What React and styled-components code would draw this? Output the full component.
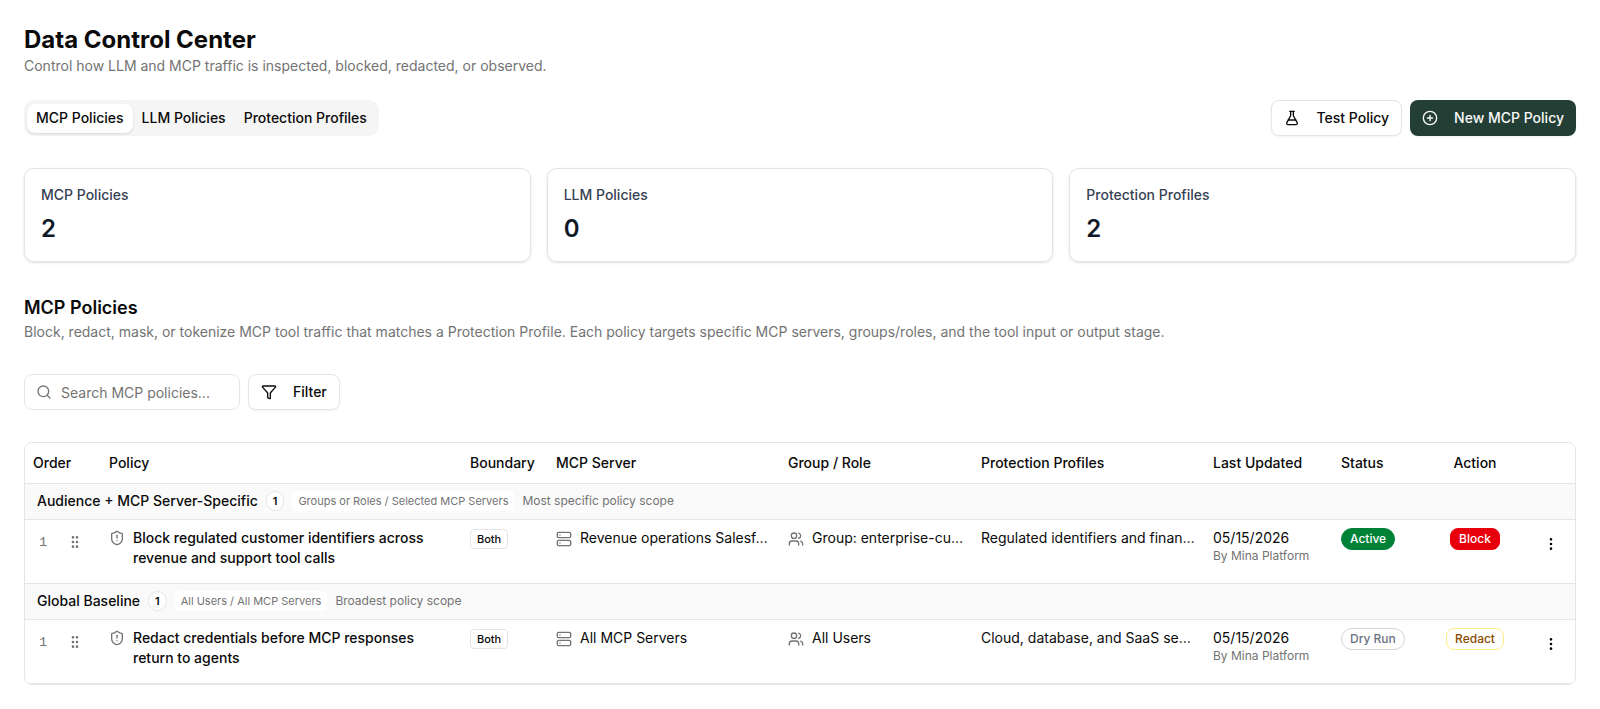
import React from 'react'
import styled, { createGlobalStyle } from 'styled-components'
import {
  CirclePlus,
  EllipsisVertical,
  FlaskConical,
  Funnel,
  GripVertical,
  Search,
  Server,
  ShieldAlert,
  Users,
} from 'lucide-react'

const stats = [
  { label: 'MCP Policies', value: 2 },
  { label: 'LLM Policies', value: 0 },
  { label: 'Protection Profiles', value: 2 },
]

const groups = [
  {
    name: 'Audience + MCP Server-Specific',
    scope: 'Groups or Roles / Selected MCP Servers',
    hint: 'Most specific policy scope',
    policies: [
      {
        order: 1,
        name: 'Block regulated customer identifiers across revenue and support tool calls',
        boundary: 'Both',
        server: 'Revenue operations Salesf…',
        group: 'Group: enterprise-cu…',
        profiles: 'Regulated identifiers and finan…',
        date: '05/15/2026',
        author: 'By Mina Platform',
        status: 'Active',
        action: 'Block',
      },
    ],
  },
  {
    name: 'Global Baseline',
    scope: 'All Users / All MCP Servers',
    hint: 'Broadest policy scope',
    policies: [
      {
        order: 1,
        name: 'Redact credentials before MCP responses return to agents',
        boundary: 'Both',
        server: 'All MCP Servers',
        group: 'All Users',
        profiles: 'Cloud, database, and SaaS se…',
        date: '05/15/2026',
        author: 'By Mina Platform',
        status: 'Dry Run',
        action: 'Redact',
      },
    ],
  },
]

function PolicyRow({ policy }) {
  return (
    <Row>
      <OrderCell>
        <OrderNumber>{policy.order}</OrderNumber>
        <GripVertical size={16} />
      </OrderCell>
      <IconCell $iconTop="2px">
        <ShieldAlert size={16} />
        <PolicyName>{policy.name}</PolicyName>
      </IconCell>
      <Cell>
        <Boundary>{policy.boundary}</Boundary>
      </Cell>
      <IconCell $iconTop="3px">
        <Server size={16} />
        <Truncated>{policy.server}</Truncated>
      </IconCell>
      <IconCell $iconTop="3px">
        <Users size={16} />
        <Truncated>{policy.group}</Truncated>
      </IconCell>
      <Cell>
        <Truncated>{policy.profiles}</Truncated>
      </Cell>
      <Cell>
        <div>{policy.date}</div>
        <Author>{policy.author}</Author>
      </Cell>
      <Cell>
        <Status $variant={policy.status}>{policy.status}</Status>
      </Cell>
      <Cell $center>
        <Action $variant={policy.action}>{policy.action}</Action>
      </Cell>
      <MenuCell>
        <EllipsisVertical size={16} />
      </MenuCell>
    </Row>
  )
}

function App() {
  return (
    <Page>
      <GlobalStyle />
      <Title>Data Control Center</Title>
      <Description>Control how LLM and MCP traffic is inspected, blocked, redacted, or observed.</Description>

      <Toolbar>
        <Tabs>
          <Tab $active>MCP Policies</Tab>
          <Tab>LLM Policies</Tab>
          <Tab>Protection Profiles</Tab>
        </Tabs>
        <Actions>
          <Button>
            <FlaskConical size={16} />
            Test Policy
          </Button>
          <PrimaryButton>
            <CirclePlus size={16} />
            New MCP Policy
          </PrimaryButton>
        </Actions>
      </Toolbar>

      <Stats>
        {stats.map((stat) => (
          <Card key={stat.label}>
            <CardLabel>{stat.label}</CardLabel>
            <CardValue>{stat.value}</CardValue>
          </Card>
        ))}
      </Stats>

      <SectionTitle>MCP Policies</SectionTitle>
      <Description>
        Block, redact, mask, or tokenize MCP tool traffic that matches a Protection Profile. Each policy targets
        specific MCP servers, groups/roles, and the tool input or output stage.
      </Description>

      <Filters>
        <SearchBox>
          <Search size={16} />
          <SearchInput placeholder="Search MCP policies..." />
        </SearchBox>
        <Button>
          <Funnel size={16} />
          Filter
        </Button>
      </Filters>

      <Table>
        <HeaderRow>
          <HeaderCell>Order</HeaderCell>
          <HeaderCell>Policy</HeaderCell>
          <HeaderCell>Boundary</HeaderCell>
          <HeaderCell>MCP Server</HeaderCell>
          <HeaderCell>Group / Role</HeaderCell>
          <HeaderCell>Protection Profiles</HeaderCell>
          <HeaderCell>Last Updated</HeaderCell>
          <HeaderCell>Status</HeaderCell>
          <HeaderCell $center>Action</HeaderCell>
          <HeaderCell />
        </HeaderRow>
        {groups.map((group) => (
          <React.Fragment key={group.name}>
            <GroupRow>
              <GroupName>{group.name}</GroupName>
              <Count>{group.policies.length}</Count>
              <Scope>{group.scope}</Scope>
              <Hint>{group.hint}</Hint>
            </GroupRow>
            {group.policies.map((policy) => (
              <PolicyRow key={policy.name} policy={policy} />
            ))}
          </React.Fragment>
        ))}
      </Table>
    </Page>
  )
}

export default App

const GlobalStyle = createGlobalStyle`
  * {
    box-sizing: border-box;
  }

  body {
    margin: 0;
    background: #fff;
    color: #0a0a0a;
    font-family: Inter, "Liberation Sans", sans-serif;
    font-size: 14px;
    line-height: 20px;
    -webkit-font-smoothing: antialiased;
  }

  button, input {
    font: inherit;
    color: inherit;
  }

  svg {
    flex-shrink: 0;
  }
`

const Page = styled.main`
  padding: 24px;
`

const Title = styled.h1`
  margin: 0;
  font-size: 24px;
  line-height: 32px;
  font-weight: 700;
`

const Description = styled.p`
  margin: 0;
  color: #737373;
`

const Toolbar = styled.div`
  display: flex;
  justify-content: space-between;
  margin-top: 24px;
`

const Tabs = styled.div`
  display: flex;
  align-items: flex-end;
  height: 36px;
  padding: 3px;
  border-radius: 10px;
  background: #f5f5f5;
`

const Tab = styled.button`
  height: 29px;
  padding: 0 8px 1px;
  border: 1px solid transparent;
  border-radius: 8px;
  background: ${(props) => (props.$active ? '#fff' : 'transparent')};
  box-shadow: ${(props) => (props.$active ? '0 1px 3px rgba(0, 0, 0, 0.1), 0 1px 2px -1px rgba(0, 0, 0, 0.1)' : 'none')};
  font-weight: 500;
  white-space: nowrap;
`

const Actions = styled.div`
  display: flex;
  gap: 8px;
`

const Button = styled.button`
  display: flex;
  align-items: center;
  gap: 16px;
  height: 36px;
  padding: 0 12px;
  border: 1px solid #e5e5e5;
  border-radius: 8px;
  background: #fff;
  box-shadow: 0 1px 2px rgba(0, 0, 0, 0.05);
  font-weight: 500;
  white-space: nowrap;
`

const PrimaryButton = styled(Button)`
  border: none;
  background: #233f35;
  color: #fafafa;
`

const Stats = styled.div`
  display: grid;
  grid-template-columns: repeat(3, 1fr);
  gap: 16px;
  margin: 32px 0;
`

const Card = styled.div`
  padding: 16px;
  border: 1px solid #e5e5e5;
  border-radius: 10px;
  box-shadow: 0 1px 3px rgba(0, 0, 0, 0.1), 0 1px 2px -1px rgba(0, 0, 0, 0.1);
`

const CardLabel = styled.div`
  color: #364153;
  font-weight: 500;
`

const CardValue = styled.div`
  margin-top: 8px;
  color: #101828;
  font-size: 24px;
  line-height: 32px;
  font-weight: 600;
`

const SectionTitle = styled.h2`
  margin: 0;
  font-size: 18px;
  line-height: 28px;
  font-weight: 600;
`

const Filters = styled.div`
  display: flex;
  gap: 8px;
  margin: 32px 0;
`

const SearchBox = styled.label`
  display: flex;
  align-items: center;
  gap: 9px;
  width: 216px;
  height: 36px;
  padding: 0 11px;
  border: 1px solid #e5e5e5;
  border-radius: 8px;
  color: #737373;
`

const SearchInput = styled.input`
  width: 100%;
  padding: 2px 0 0;
  border: none;
  outline: none;

  &::placeholder {
    color: #737373;
    opacity: 1;
  }
`

const Table = styled.div`
  overflow: hidden;
  border: 1px solid #e5e5e5;
  border-radius: 8px;
`

const Row = styled.div`
  display: grid;
  grid-template-columns: 76px 361px 86px 232px 193px 232px 128px 92px 100px 50px;
  height: 64px;
  border-bottom: 1px solid #e5e5e5;
`

const HeaderRow = styled(Row)`
  height: 41px;
  align-items: center;
`

const HeaderCell = styled.div`
  padding: 0 8px;
  font-weight: 500;
  text-align: ${(props) => (props.$center ? 'center' : 'left')};
`

const GroupRow = styled.div`
  display: flex;
  align-items: center;
  gap: 8px;
  height: 36px;
  padding: 0 12px 1px;
  border-bottom: 1px solid #e5e5e5;
  background: #fafafa;
`

const GroupName = styled.span`
  font-weight: 500;
`

const Count = styled.span`
  width: 18.6px;
  border: 1px solid #e5e5e5;
  border-radius: 10px;
  background: #fff;
  font-size: 11px;
  line-height: 18px;
  font-weight: 600;
  text-align: center;
`

const Scope = styled.span`
  padding: 2px 6px;
  border-radius: 4px;
  background: #fff;
  color: #737373;
  font-size: 11px;
  line-height: 16px;
`

const Hint = styled.span`
  color: #737373;
  font-size: 12px;
  line-height: 16px;
`

const Cell = styled.div`
  min-width: 0;
  padding: 8px;
  text-align: ${(props) => (props.$center ? 'center' : 'left')};
`

const IconCell = styled(Cell)`
  display: flex;
  gap: 8px;

  svg {
    margin-top: ${(props) => props.$iconTop};
    color: #737373;
  }
`

const OrderCell = styled(Cell)`
  display: flex;
  gap: 20px;
  padding: 12px 14px;
  color: #737373;

  svg {
    margin-top: 2px;
  }
`

const OrderNumber = styled.span`
  width: 8px;
  font-family: "Liberation Mono", monospace;
  font-size: 13.5px;
  line-height: 21px;
`

const PolicyName = styled.div`
  max-width: 300px;
  font-weight: 500;
`

const Truncated = styled.div`
  overflow: hidden;
  text-overflow: ellipsis;
  white-space: nowrap;
`

const Boundary = styled.span`
  display: inline-block;
  margin-top: 1px;
  padding: 1px 6px;
  border: 1px solid #e5e5e5;
  border-radius: 4px;
  font-size: 11px;
  line-height: 16px;
  font-weight: 500;
`

const Author = styled.div`
  color: #737373;
  font-size: 12px;
  line-height: 16px;
`

const statusColors = {
  Active: 'background: #008236; border-color: #008236; color: #fff;',
  'Dry Run': 'background: #fff; border-color: #d1d5dc; color: #6a7282;',
}

const actionColors = {
  Block: 'background: #e7000b; border-color: #e7000b; color: #fff;',
  Redact: 'background: #fff; border-color: #ffee85; color: #894b00;',
}

const Badge = styled.span`
  display: inline-block;
  padding: 2px 8px;
  border: 1px solid transparent;
  font-size: 12px;
  line-height: 16px;
  font-weight: 500;
  white-space: nowrap;
`

const Status = styled(Badge)`
  border-radius: 999px;
  ${(props) => statusColors[props.$variant]}
`

const Action = styled(Badge)`
  border-radius: 8px;
  ${(props) => actionColors[props.$variant]}
`

const MenuCell = styled.div`
  display: flex;
  justify-content: center;
  padding: 16px 0 0 2px;
`
